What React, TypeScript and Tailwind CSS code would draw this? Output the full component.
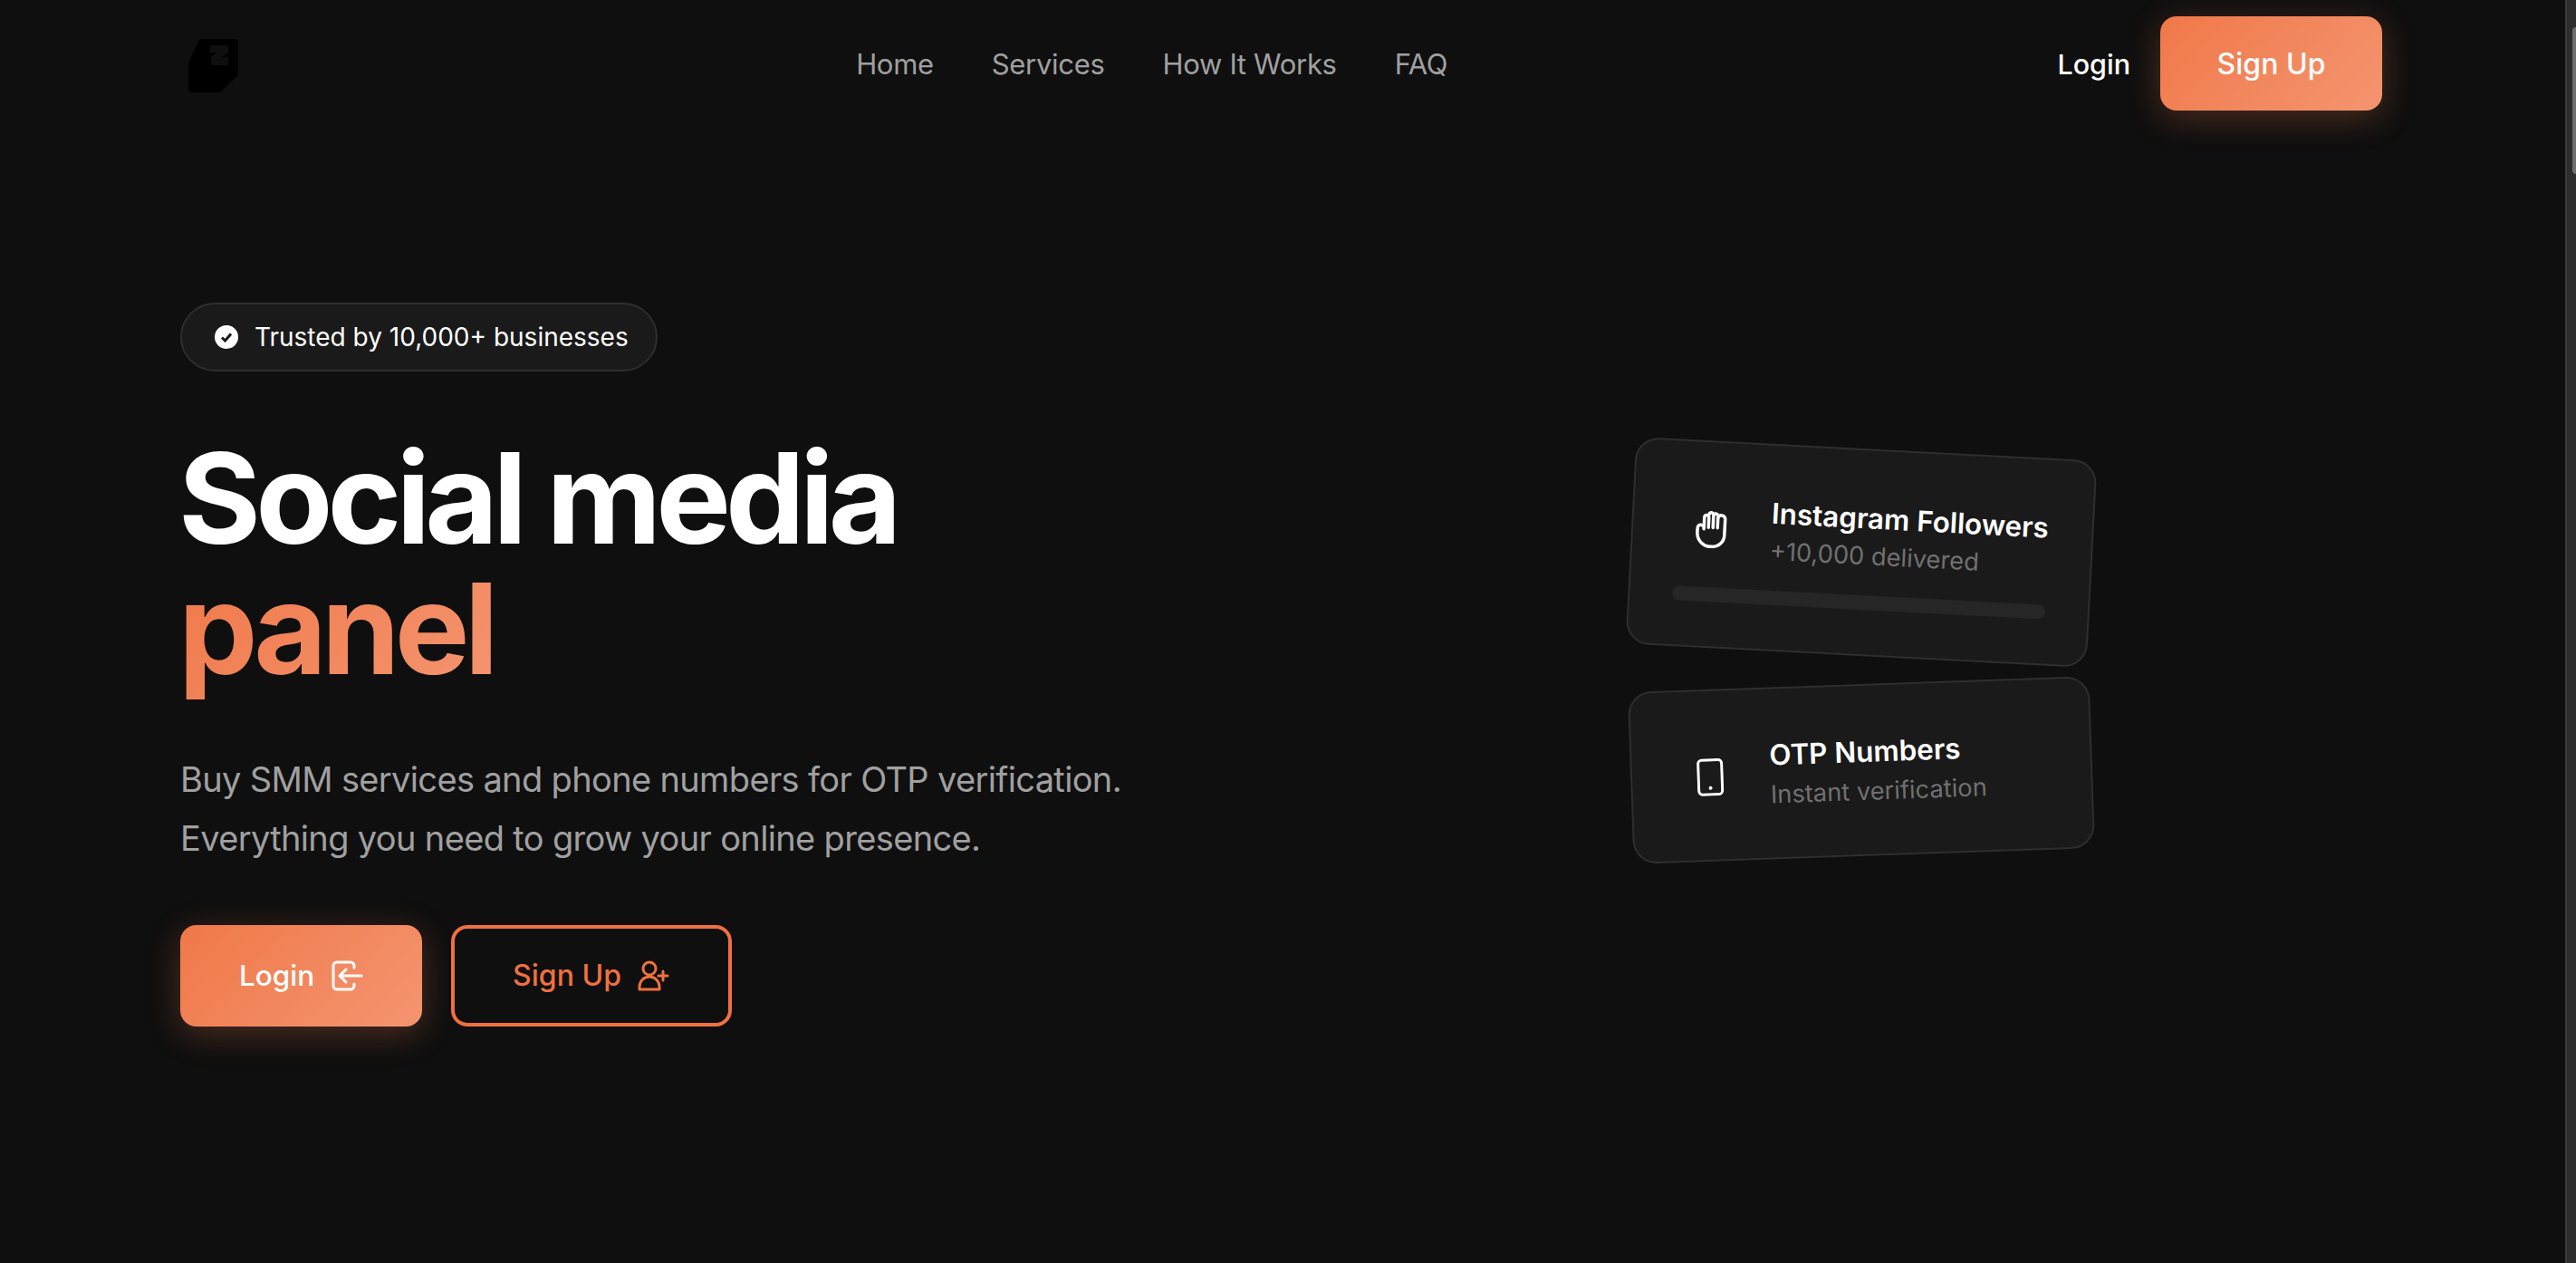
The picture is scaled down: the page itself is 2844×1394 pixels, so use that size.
const inter = { fontFamily: '"Inter", "Liberation Sans", sans-serif' };

function Logo() {
  return (
    <svg width="72" height="60" viewBox="0 0 72 60" className="ml-[1px] mt-[7px] block">
      <path
        fillRule="evenodd"
        fill="#000"
        d="M20 1 a4 4 0 0 1 3-1 H59 a4 4 0 0 1 4 4 V38 a4 4 0 0 1-1 3 L44 58 a4 4 0 0 1-3 1 H12 a4 4 0 0 1-4-4 V26 Z M32 7 H52 V15 L44 20 H52 V29 H33 V20 L40 15 H32 Z"
      />
    </svg>
  );
}

function CheckBadge() {
  return (
    <svg width="26" height="26" viewBox="0 0 26 26">
      <circle cx="13" cy="13" r="13" fill="#fff" />
      <path d="M8 13.5 l3.5 3.5 L18 9.5" fill="none" stroke="#1a1a1a" strokeWidth="3" />
    </svg>
  );
}

function LoginIcon() {
  return (
    <svg width="36" height="36" viewBox="0 0 36 36" fill="none" stroke="currentColor" strokeWidth="3" strokeLinecap="round" strokeLinejoin="round">
      <path d="M26 9 V7 a4 4 0 0 0-4-4 H7 a4 4 0 0 0-4 4 V29 a4 4 0 0 0 4 4 H22 a4 4 0 0 0 4-4 V27" />
      <path d="M34 18 H10 M17 11 L10 18 L17 25" />
    </svg>
  );
}

function UserPlusIcon() {
  return (
    <svg width="36" height="36" viewBox="0 0 36 36" fill="none" stroke="currentColor" strokeWidth="3" strokeLinecap="round" strokeLinejoin="round">
      <circle cx="13" cy="10" r="7" />
      <path d="M2 33 V30 a11 11 0 0 1 22 0 V33 Z" />
      <path d="M28 13 V23 M23 18 H33" />
    </svg>
  );
}

function HandIcon() {
  return (
    <svg width="36" height="42" viewBox="0 0 36 42" fill="none" stroke="#fff" strokeWidth="3.5" strokeLinecap="round" strokeLinejoin="round">
      <path d="M10 21 V8 a2.5 2.5 0 0 1 5 0 V19 M15 5 a2.5 2.5 0 0 1 5 0 V19 M20 6 a2.5 2.5 0 0 1 5 0 V19 M25 9 a2.5 2.5 0 0 1 8 0 V27 a13 13 0 0 1-13 13 h-2 A15 15 0 0 1 3 26 V20 a3 3 0 0 1 7 0" />
    </svg>
  );
}

function PhoneIcon() {
  return (
    <svg width="30" height="42" viewBox="0 0 30 42" fill="none" stroke="#fff" strokeWidth="3">
      <rect x="2" y="2" width="26" height="38" rx="4" />
      <circle cx="15" cy="33" r="2" fill="#fff" stroke="none" />
    </svg>
  );
}

function NavBar() {
  return (
    <nav className="flex items-center justify-between h-[140px] pb-[1px]">
      <Logo />
      <div className="flex items-center gap-[64px] pt-[4px] text-[31px] tracking-[-0.01em] text-[#a0a0a0]">
        <a>Home</a>
        <a>Services</a>
        <a>How It Works</a>
        <a>FAQ</a>
      </div>
      <div className="flex items-center gap-[33px]">
        <a className="pt-[3px] text-[30.5px] font-medium text-white">Login</a>
        <button className="w-[245px] h-[104px] rounded-[18px] bg-[linear-gradient(135deg,#f07849,#f49570)] pt-[3px] text-[32px] font-medium text-white shadow-[0_8px_36px_rgba(241,122,76,0.28)]">
          Sign Up
        </button>
      </div>
    </nav>
  );
}

function ServiceCard({ icon, title, sub, bar, tilt }: { icon: React.ReactNode; title: string; sub: string; bar?: boolean; tilt: string }) {
  return (
    <div className={`rounded-[26px] border-2 border-[#2e2e2e] bg-[#1a1a1a] px-[47px] ${bar ? "h-[229px] pt-[55px]" : "h-[190px] pt-[53px]"} ${tilt}`}>
      <div className="flex items-center gap-[46px] pl-[19px]">
        <div className="flex w-[40px] justify-center">{icon}</div>
        <div>
          <div className="text-[31.4px] leading-[40px] font-semibold text-white">{title}</div>
          <div className={`text-[27.3px] leading-[40px] text-[#707070] ${bar ? "mt-[2px]" : "mt-[4px]"}`}>{sub}</div>
        </div>
      </div>
      {bar && <div className="mt-[23px] h-[16px] rounded-full bg-[#262626]" />}
    </div>
  );
}

export default function App() {
  return (
    <div className="flex h-screen overflow-hidden bg-[#0f0f0f]" style={inter}>
      <main className="flex-1 pl-[199px] pr-[202px]">
        <NavBar />
        <section className="flex justify-between pr-[320px]">
          <div className="pt-[194px]">
            <div className="inline-flex h-[76px] items-center gap-[18px] rounded-full border-2 border-[#2e2e2e] bg-[#1a1a1a] pl-[36px] pr-[30px] text-[28px] text-white">
              <CheckBadge />
              <span>Trusted by 10,000+ businesses</span>
            </div>
            <h1 className="mt-[68px] -ml-[2px] text-[139px] leading-[144px] font-bold tracking-[-0.042em] text-white">
              Social media
              <br />
              <span className="bg-[linear-gradient(135deg,#f07849,#f49570)] bg-clip-text text-transparent">panel</span>
            </h1>
            <p className="mt-[62px] text-[38px] leading-[65px] tracking-[-0.017em] text-[#a0a0a0]">
              Buy SMM services and phone numbers for OTP verification.
              <br />
              Everything you need to grow your online presence.
            </p>
            <div className="mt-[63px] flex gap-[32px]">
              <button className="flex w-[267px] h-[112px] items-center justify-center gap-[18px] rounded-[18px] bg-[linear-gradient(135deg,#f07849,#f49570)] text-[31.5px] font-medium text-white shadow-[0_8px_36px_rgba(241,122,76,0.28)]">
                Login
                <LoginIcon />
              </button>
              <button className="flex w-[310px] h-[112px] items-center justify-center gap-[18px] rounded-[18px] border-[4px] border-[#f0703f] text-[32px] font-medium text-[#f0703f]">
                Sign Up
                <UserPlusIcon />
              </button>
            </div>
          </div>
          <div className="flex w-[510px] flex-col gap-[31px] pt-[355px]">
            <ServiceCard icon={<HandIcon />} title="Instagram Followers" sub="+10,000 delivered" bar tilt="rotate-[3deg]" />
            <ServiceCard icon={<PhoneIcon />} title="OTP Numbers" sub="Instant verification" tilt="rotate-[-2deg]" />
          </div>
        </section>
      </main>
      <aside className="w-[12px] h-full border-l-2 border-[#3a3a3a] bg-[#2d2d2d] pt-[30px] pl-[6px]">
        <div className="h-[162px] rounded-l-[4px] bg-[#6e6e6e]" />
      </aside>
    </div>
  );
}
